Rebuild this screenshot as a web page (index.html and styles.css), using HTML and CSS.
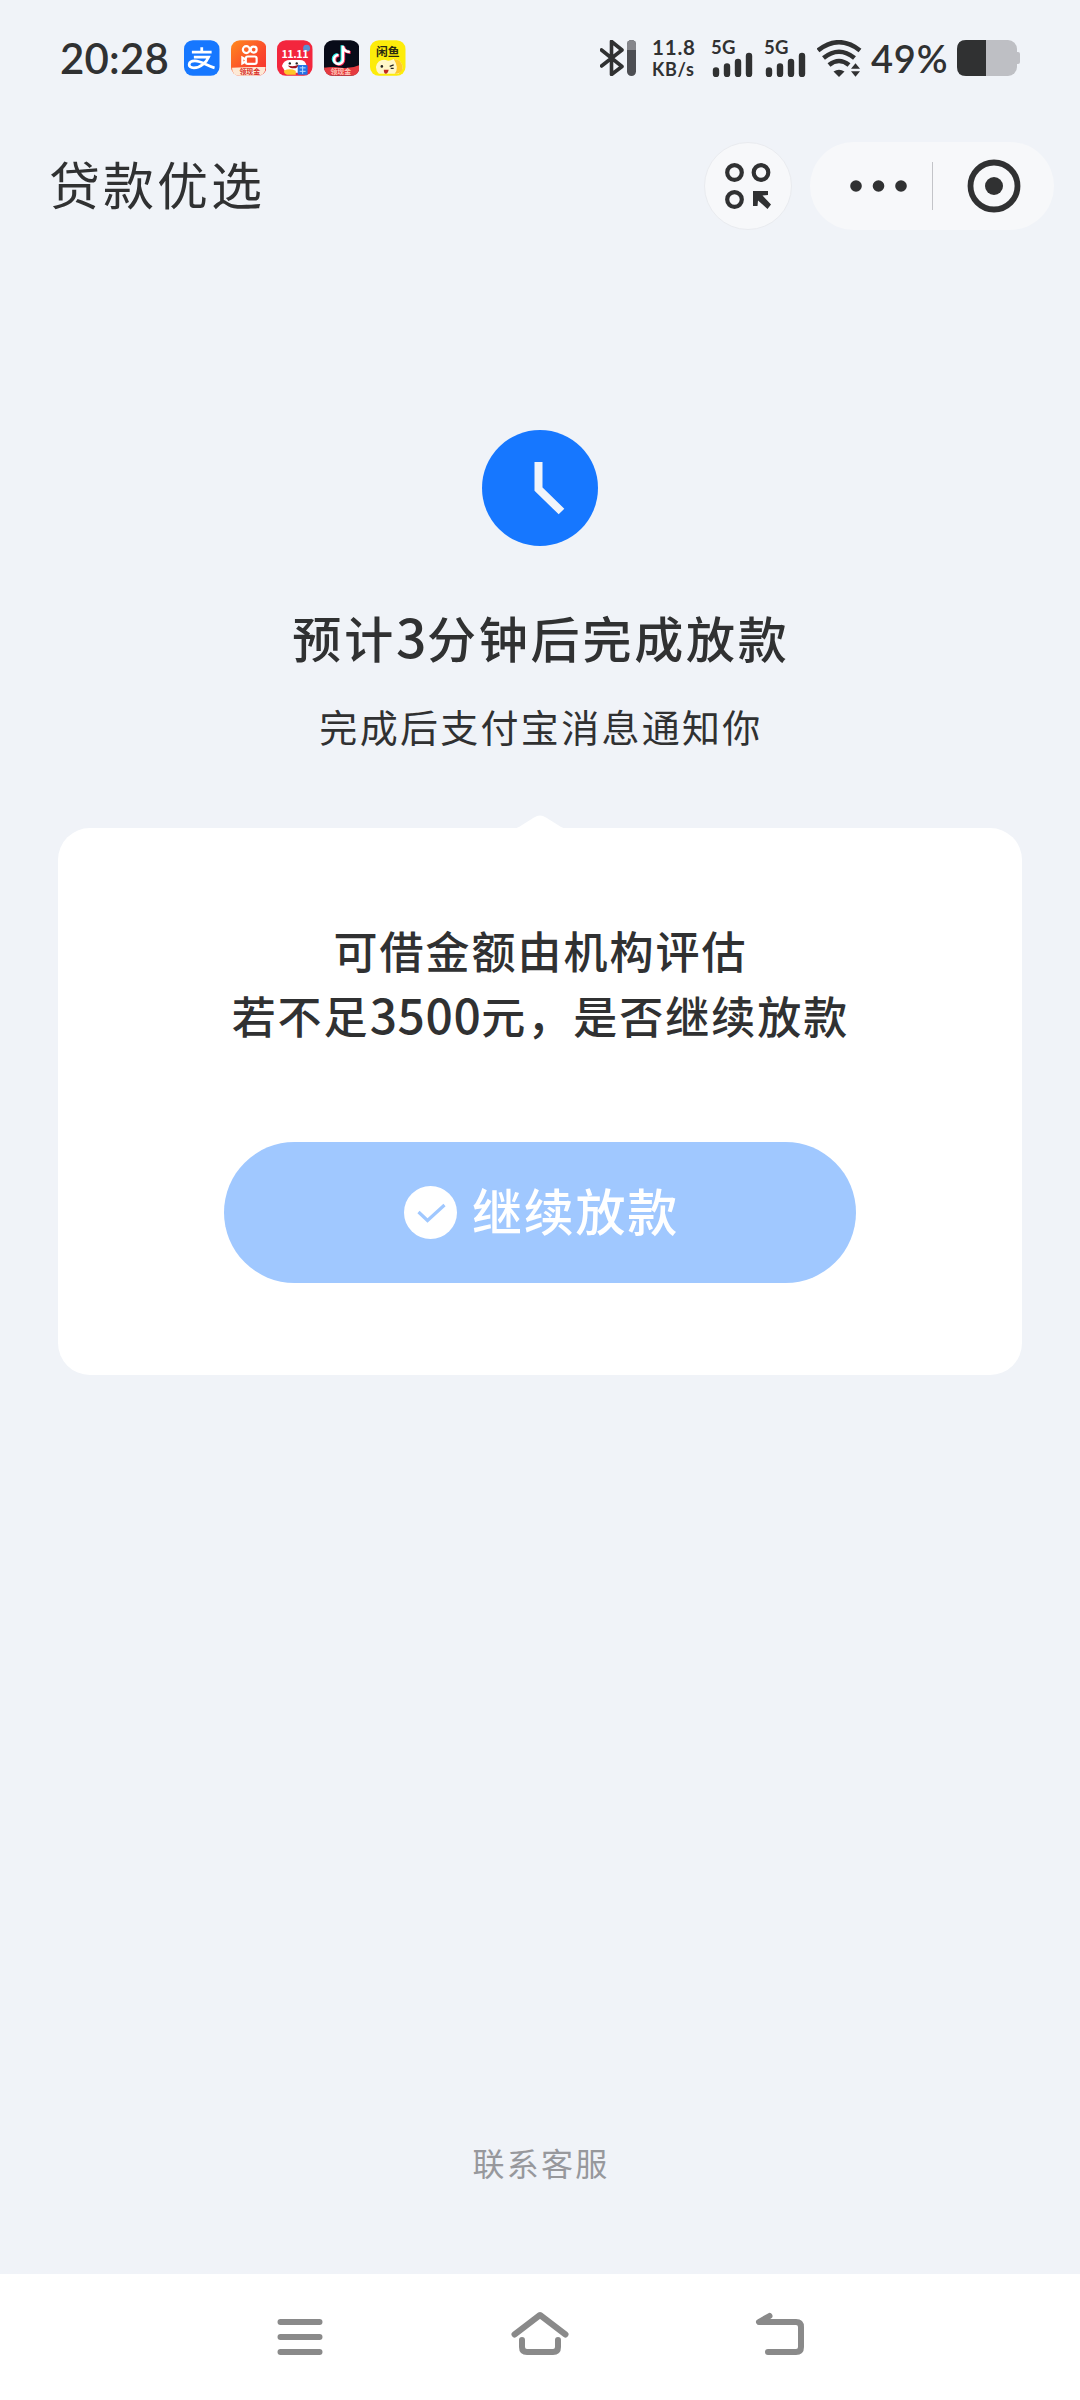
FILE: index.html
```html
<!DOCTYPE html>
<html lang="zh-CN">
<head>
<meta charset="utf-8">
<title>贷款优选</title>
<link rel="stylesheet" href="styles.css">
</head>
<body>
<div class="screen">
  <div class="status">
    <span class="time">20:28</span>
    <div class="apps">
      <svg class="app" viewBox="0 0 36 36"><rect width="36" height="36" rx="9" fill="#1677ff"/><path d="M8 12h20M18 7v5M10 17h15c-2 5-8 11-15 11-7 0-6-7 1-7 7 0 12 5 20 7" fill="none" stroke="#fff" stroke-width="2.8"/></svg>
      <svg class="app" viewBox="0 0 36 36"><defs><linearGradient id="ks" x1="0" y1="0" x2="1" y2="1"><stop offset="0" stop-color="#ff8a1e"/><stop offset=".6" stop-color="#fb4a2c"/><stop offset="1" stop-color="#f53030"/></linearGradient></defs><rect width="36" height="36" rx="9" fill="url(#ks)"/><g fill="none" stroke="#fff" stroke-width="2.2"><circle cx="15.500" cy="9.500" r="3.500"/><circle cx="23" cy="9.500" r="3"/><rect x="15" y="16.500" width="11" height="7.500" rx="2"/><path d="M15 19.500l-3.500-2v6l3.500-2"/></g><path d="M1 28q17-1 34-1v1q0 8-9 8H9q-8 0-8-8z" fill="#fde9d6"/><text x="19" y="34.500" class="tag tag-red">领现金</text></svg>
      <svg class="app" viewBox="0 0 36 36"><rect width="36" height="36" rx="9" fill="#f3263d"/><circle cx="30" cy="8" r="3.500" fill="#5b8fd0"/><text x="18" y="18" class="eleven">11.11</text><path d="M5 26q2-6 8-6l10 0q6 0 7 6l-3 7H9z" fill="#fff"/><circle cx="13" cy="23.500" r="1.200" fill="#222"/><circle cx="20" cy="23.500" r="1.200" fill="#222"/><path d="M11 25.500q6 2 11-1-1 4-5 4t-6-3z" fill="#a01420"/><path d="M7 31q6-3 12 0v4H10q-3-1-3-4z" fill="#ffc629"/><rect x="21" y="25" width="10" height="10" rx="1" fill="#2473e8"/><path d="M23 28h6M23 31.500h6M26 26v8" stroke="#b9dcff" stroke-width="1"/></svg>
      <svg class="app" viewBox="0 0 36 36"><rect width="36" height="36" rx="9" fill="#080b18"/><g fill="none" stroke-width="3"><path d="M18.300 5v14a4.500 4.500 0 1 1-4.500-4.500M18.300 6q1 5 7 5.500" stroke="#25f4ee"/><path d="M20 6v14a4.500 4.500 0 1 1-4.500-4.500M20 7q1 5 7 5.500" stroke="#fe2c55"/><path d="M19.200 5.500v14a4.500 4.500 0 1 1-4.500-4.500M19.200 6.500q1 5 7 5.500" stroke="#fff" stroke-width="2.600"/></g><path d="M0 28q10-2 18 0 10 1 18-3v3q-1 8-9 8H9q-8 0-9-8z" fill="#e53a40"/><text x="17" y="34.500" class="tag tag-pink">领现金</text></svg>
      <svg class="app" viewBox="0 0 36 36"><rect width="36" height="36" rx="9" fill="#fdec0a"/><text x="18" y="15.500" class="fish">闲鱼</text><path d="M6 27q2-8 10-7 3 2 8-1 9 0 9 10l-4 5H9q-3-3-3-7z" fill="#fff7c8"/><path d="M24 19q9 0 9 10-1 5-8 5 5-6-1-15z" fill="#ffca2b"/><circle cx="12" cy="26.500" r="1.300" fill="#222"/><path d="M20 26.500l4-1.500M21 28.500l3 0" stroke="#222" stroke-width="1.200"/><path d="M14 30h5q-1 4-3 4t-2-4z" fill="#c22a20"/></svg>
    </div>
    <div class="sys">
      <svg class="bt" viewBox="0 0 36 36"><path d="M1.500 10l20.500 16.500-10.500 8V1.500L22 10 1.500 26" fill="none" stroke="#303132" stroke-width="3.600" stroke-linejoin="round" stroke-linecap="round"/><rect x="27" y="0" width="9" height="36" rx="4.500" fill="#4d4e53"/><path d="M27 10V4.500a4.500 4.500 0 0 1 9 0V10z" fill="#85868b"/></svg>
      <div class="speed"><span class="num">11.8</span><span class="unit">KB/s</span></div>
      <div class="sig"><span class="g">5G</span><svg viewBox="0 0 42 25" width="42" height="25"><path d="M5 18.500v3.500M16 14.500V22M27 10v12M38 4v18" stroke="#303132" stroke-width="6.400" stroke-linecap="round"/></svg></div>
      <div class="sig"><span class="g">5G</span><svg viewBox="0 0 42 25" width="42" height="25"><path d="M5 18.500v3.500M16 14.500V22M27 10v12M38 4v18" stroke="#303132" stroke-width="6.400" stroke-linecap="round"/></svg></div>
      <svg class="wifi" viewBox="0 0 46 37"><g fill="none" stroke="#303132" stroke-width="4.600"><path d="M1 10.500Q22 -6 43 10.500"/><path d="M6.500 18Q22 5.500 37.500 18"/><path d="M12 25Q22 17 32 25"/></g><path d="M16.500 31.500q5.500-3.500 11 0L22 37z" fill="#303132"/><path d="M34 28.800l4.500-5.500 4.500 5.500zM34 31.200h9l-4.500 5.500z" fill="#303132"/></svg>
      <span class="pct">49%</span>
      <svg class="batt" viewBox="0 0 63 36"><rect width="60" height="36" rx="9" fill="#bebfc4"/><path d="M59 12h2q2 0 2 2v8q0 2-2 2h-2z" fill="#bebfc4"/><path d="M29 0H9Q0 0 0 9v18q0 9 9 9h20z" fill="#303132"/></svg>
    </div>
  </div>

  <header class="header">
    <h1 class="brand">贷款优选</h1>
    <div class="round">
      <svg viewBox="0 0 46 46" width="46" height="46"><g fill="none" stroke="#303132" stroke-width="4.200"><circle cx="9.500" cy="9.500" r="7.300"/><circle cx="36" cy="9.500" r="7.300"/><circle cx="9.500" cy="36.500" r="7.300"/></g><path d="M28 28h15v4l-5.500.5L46 41.500 42.500 46 33 37.500l-.5 5.500H28z" fill="#303132"/></svg>
    </div>
    <div class="capsule">
      <svg class="dots" viewBox="0 0 58 12"><circle cx="6" cy="6" r="5.800"/><circle cx="28.500" cy="6" r="5.800"/><circle cx="51" cy="6" r="5.800"/></svg>
      <span class="sep"></span>
      <svg class="target" viewBox="0 0 54 54"><circle cx="27" cy="27" r="23.500" fill="none" stroke="#303132" stroke-width="5.800"/><circle cx="27" cy="27" r="9"/></svg>
    </div>
  </header>

  <main class="main">
    <svg class="clock" viewBox="0 0 116 116"><circle cx="58" cy="58" r="58" fill="#1677ff"/><path d="M56.500 32v27L79.500 81.500" fill="none" stroke="#f0f4fa" stroke-width="8"/></svg>
    <h2 class="title">预计<span class="d">3</span>分钟后完成放款</h2>
    <p class="sub">完成后支付宝消息通知你</p>
    <section class="card">
      <svg class="notch" viewBox="0 0 60 14"><path d="M0 14q7 0 12-4L24 2.500q6-4 12 0L48 10q5 4 12 4z" fill="#fff"/></svg>
      <p class="q">可借金额由机构评估<br>若不足<span class="d">3500</span>元，是否继续放款</p>
      <button class="btn"><svg class="ok" viewBox="0 0 53 53"><circle cx="26.500" cy="26.500" r="26.500" fill="#fff"/><path d="M14.500 26L23.500 34.500 40.500 19" fill="none" stroke="#a0c8ff" stroke-width="3.200"/></svg><span class="label">继续放款</span></button>
    </section>
    <a class="service">联系客服</a>
  </main>

  <nav class="nav">
    <svg viewBox="0 0 60 60"><path d="M10.500 17h39M10.500 32h39M10.500 47h39"/></svg>
    <svg viewBox="0 0 60 60"><path d="M4.500 29.500L30 10 55.500 29.500M12 35v7q0 5 5 5h26q5 0 5-5v-7"/></svg>
    <svg viewBox="0 0 60 60"><path d="M19.500 11L9 17h37q5 0 5 5v20q0 5-5 5H18"/></svg>
  </nav>
</div>
</body>
</html>
```
FILE: styles.css
```css
* { box-sizing: border-box; }
body { margin: 0; background: #f0f3f8; color: #303132; font-family: "Noto Sans CJK SC", sans-serif; }
h1, h2, p { margin: 0; }
svg { display: block; flex: none; }
.screen { width: 1080px; height: 2400px; display: flex; flex-direction: column; }

.status { height: 116px; padding: 0 60px; display: flex; align-items: center; }
.time { width: 124px; font-family: Lato, sans-serif; font-size: 42px; font-weight: 600; line-height: 60px; letter-spacing: 0.200px; white-space: nowrap; }
.apps { display: flex; gap: 11px; }
.app { width: 35.500px; height: 36px; }
.tag { font-size: 7px; font-weight: 700; text-anchor: middle; }
.tag-red { fill: #d8302a; }
.tag-pink { fill: #ffc5b8; }
.eleven { font-size: 11px; font-weight: 700; fill: #fff; text-anchor: middle; letter-spacing: -0.5px; }
.fish { font-size: 12px; font-weight: 700; fill: #2a2a10; text-anchor: middle; }
.sys { margin-left: auto; display: flex; align-items: center; white-space: nowrap; }
.bt { width: 36px; height: 36px; margin-right: 16px; }
.speed { width: 44px; margin-right: 15px; display: flex; flex-direction: column; font-family: Lato, sans-serif; font-weight: 700; }
.num { font-size: 20.500px; line-height: 23px; letter-spacing: 0.800px; }
.unit { font-size: 18px; line-height: 21px; letter-spacing: 0.700px; }
.sig { width: 42px; height: 37px; margin-right: 11px; display: flex; flex-direction: column; justify-content: space-between; }
.g { height: 12px; font-family: Lato, sans-serif; font-size: 18.500px; font-weight: 700; line-height: 15px; letter-spacing: 0.200px; }
.wifi { width: 46px; height: 37px; margin-right: 8px; }
.pct { width: 78px; margin-right: 8px; font-family: Lato, sans-serif; font-size: 38px; font-weight: 600; line-height: 60px; letter-spacing: 0.800px; }
.batt { width: 63px; height: 36px; }

.header { height: 140px; padding: 0 26px 0 49px; display: flex; align-items: center; }
.brand { flex: 1; padding-bottom: 6px; font-size: 51px; font-weight: 400; line-height: 76px; letter-spacing: 3px; }
.round { width: 88px; height: 88px; margin-right: 18px; border-radius: 50%; background: #f7f8fa; border: 1px solid #e9ebef; display: flex; align-items: center; justify-content: center; }
.capsule { width: 244px; height: 88px; border-radius: 44px; background: #f7f8fa; display: flex; align-items: center; padding-left: 40px; fill: #303132; }
.dots { width: 58px; height: 12px; }
.sep { width: 1px; height: 48px; margin: 0 34px 0 24px; background: #c3c4c8; }
.target { width: 54px; height: 54px; }

.main { flex: 1; padding: 174px 58px 0; display: flex; flex-direction: column; align-items: center; }
.clock { width: 116px; height: 116px; }
.title { height: 74px; margin-top: 54px; padding-left: 2px; font-size: 49px; font-weight: 500; line-height: 74px; letter-spacing: 2.800px; }
.sub { margin-top: 24px; padding-left: 2px; font-size: 38px; line-height: 56px; letter-spacing: 2.300px; }
.card { position: relative; width: 964px; height: 547px; margin-top: 74px; padding-top: 90px; border-radius: 32px; background: #fff; display: flex; flex-direction: column; align-items: center; }
.notch { position: absolute; left: 452px; top: -13px; width: 60px; height: 14px; }
.q { height: 130px; padding-left: 1px; font-size: 44px; font-weight: 500; line-height: 65px; letter-spacing: 2px; text-align: center; }
.d { font-size: 1.090em; line-height: 1; letter-spacing: 0.600px; }
.btn { width: 632px; height: 141px; margin-top: 94px; padding: 0 0 0 3px; border: 0; border-radius: 71px; background: #a0c8ff; color: #fff; display: flex; align-items: center; justify-content: center; gap: 15px; font: 500 50px/74px "Noto Sans CJK SC", sans-serif; letter-spacing: 1.800px; }
.label { padding-bottom: 8px; }
.ok { width: 53px; height: 53px; }
.service { margin-top: 763px; padding-left: 2px; font-size: 32px; line-height: 48px; letter-spacing: 2.200px; color: #97989c; }

.nav { height: 126px; padding: 31px 270px 0; background: #fff; display: flex; justify-content: space-between; }
.nav svg { width: 60px; height: 60px; fill: none; stroke: #8a8a8a; stroke-width: 6px; stroke-linecap: round; stroke-linejoin: round; }
```
